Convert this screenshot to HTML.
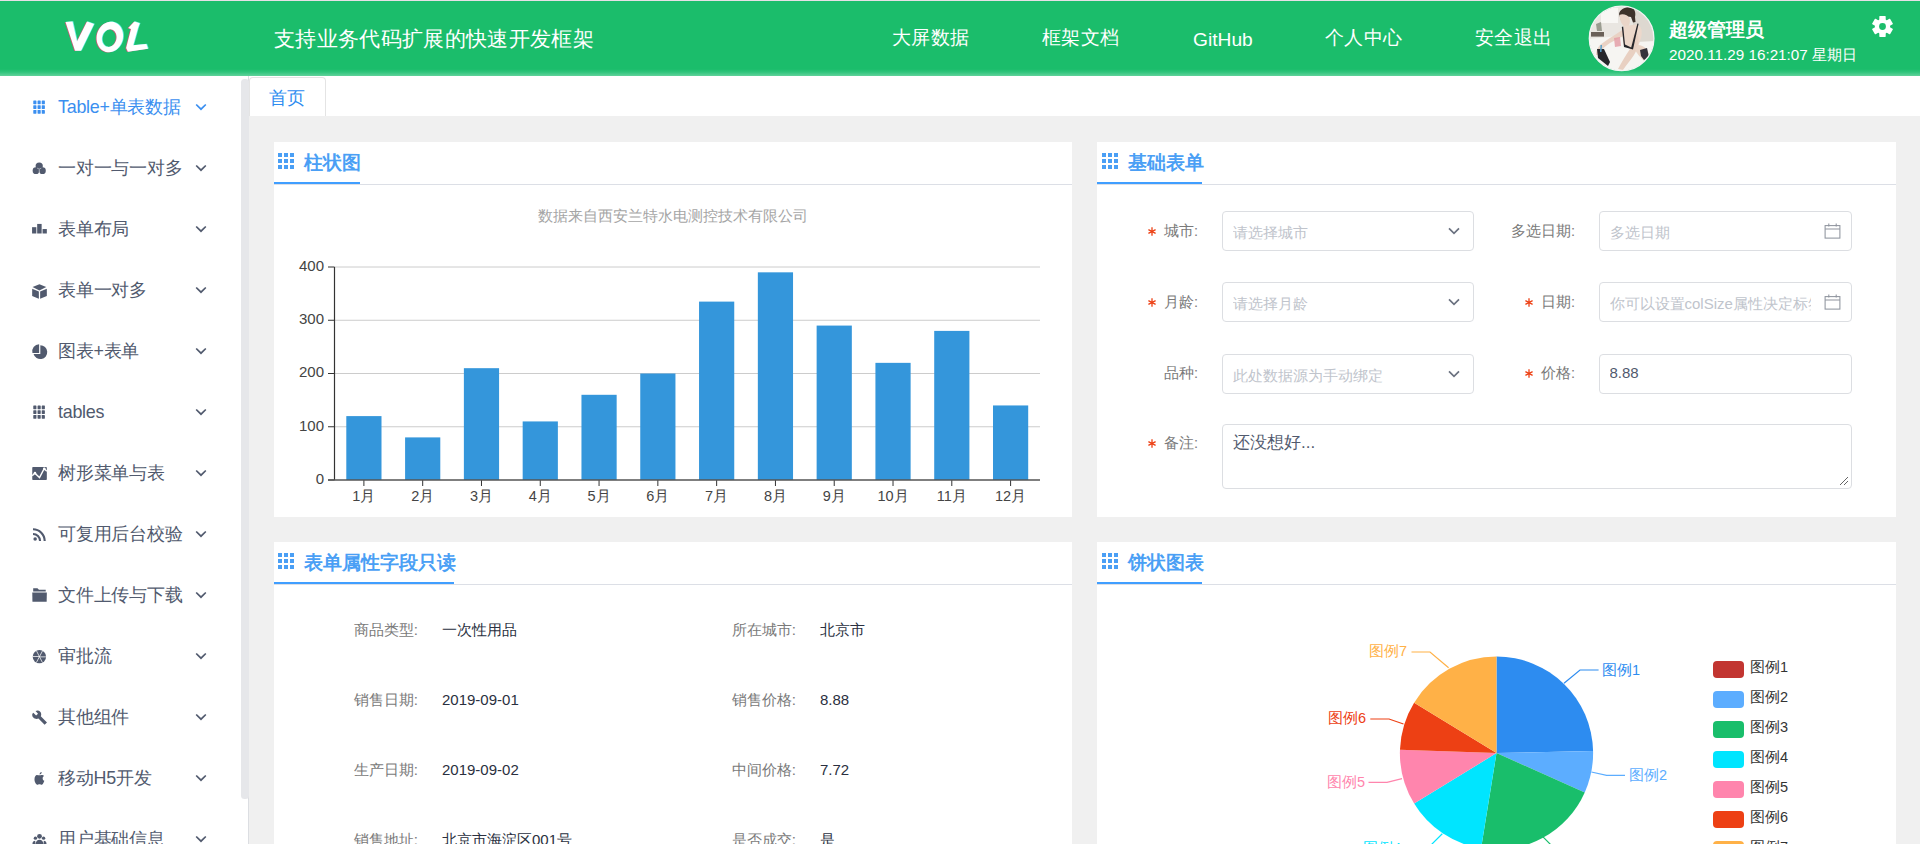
<!DOCTYPE html>
<html><head><meta charset="utf-8">
<style>
*{box-sizing:border-box;margin:0;padding:0}
html,body{width:1920px;height:844px;overflow:hidden;background:#fff;font-family:"Liberation Sans",sans-serif;position:relative}
.abs{position:absolute}
#topline{left:0;top:0;width:1920px;height:1px;background:#e6e0e6}
#header{left:0;top:1px;width:1920px;height:75px;background:linear-gradient(to bottom,#1bbd6b 0,#1bbd6b 68px,#2ec47b 71px,#55cf93 74px,#5fd29a 75px)}
.hd-t{color:#fff;white-space:nowrap;line-height:1}
#sidebar{left:0;top:76px;width:248px;height:768px;background:#fff}
#sbline{left:248px;top:76px;width:1px;height:768px;background:#dcdee2}
#sbthumb{left:241px;top:79px;width:7.5px;height:720px;background:#e6e7ea;border-radius:3.5px}
.mi{position:absolute;left:0;width:240px;height:61px}
.mi .tx{position:absolute;left:58px;top:50%;transform:translateY(-50%);margin-top:0px;font-size:17.9px;letter-spacing:-0.25px;color:#515a6e;white-space:nowrap;line-height:1}
.mi .ic{position:absolute;left:32.5px;top:50%;margin-top:-6.5px;width:13px;height:13px;overflow:visible}
.mi .chev{position:absolute;left:195px;top:50%;margin-top:-5px;width:12px;height:8px}
#main{left:249px;top:76px;width:1671px;height:768px;background:#f0f0f0}
#tabbar{left:249px;top:76px;width:1671px;height:40px;background:#fff}
#tab{left:249px;top:77px;width:77px;height:39px;border:1px solid #e4e4e4;border-bottom:none;border-radius:4px 4px 0 0;background:#fff}
.card{position:absolute;background:#fff}
.ch{position:absolute;left:0;top:0;right:0;height:43px;border-bottom:1px solid #dcdfe6}
.ch .ul{position:absolute;left:0;top:40px;height:2px;background:#409eff}
.ch .ti{position:absolute;top:9.5px;font-size:18.7px;font-weight:bold;color:#4a9ff5;white-space:nowrap;line-height:22px}
.gridic{position:absolute;width:16px;height:16px}
.inp{border:1px solid #dcdee2;border-radius:4px;background:#fff;overflow:hidden}
.inp .it{position:absolute;left:9.5px;top:50%;transform:translateY(-50%);margin-top:1px;font-size:15px;white-space:nowrap;line-height:1;max-width:212px;overflow:hidden}
.inp .it.cut{max-width:201px}
.flab{width:200px;text-align:right;font-size:14.5px;color:#7a7a7a;line-height:20px;white-space:nowrap}
.star{margin-right:8px;vertical-align:0px}
.rl{width:200px;text-align:right;font-size:15.2px;color:#7a7a7a;line-height:20px;white-space:nowrap}
.rv{font-size:15px;color:#2a3040;line-height:20px;white-space:nowrap}
</style></head><body>
<div id="topline" class="abs"></div>
<div id="header" class="abs"></div>
<svg class="abs" style="left:55px;top:12px" width="105" height="50" viewBox="0 0 105 50">
<g transform="translate(-0.8,0.3)" fill="#f0457a" opacity="0.8"><path d="M10.5,10 L17.5,9.5 L22,29.6 L32,9.5 L39,12 L26,38.8 L20,38.8Z"/><path fill-rule="evenodd" d="M67.45,28.39 L66.83,30.30 L65.99,32.12 L64.97,33.82 L63.77,35.37 L62.41,36.75 L60.93,37.92 L59.34,38.87 L57.67,39.58 L55.96,40.04 L54.22,40.25 L52.50,40.19 L50.81,39.88 L49.20,39.31 L47.67,38.49 L46.28,37.45 L45.02,36.19 L43.93,34.74 L43.03,33.12 L42.33,31.37 L41.85,29.50 L41.58,27.56 L41.55,25.58 L41.73,23.58 L42.15,21.61 L42.77,19.70 L43.61,17.88 L44.63,16.18 L45.83,14.63 L47.19,13.25 L48.67,12.08 L50.26,11.13 L51.93,10.42 L53.64,9.96 L55.38,9.75 L57.10,9.81 L58.79,10.12 L60.40,10.69 L61.92,11.51 L63.32,12.55 L64.58,13.81 L65.67,15.26 L66.57,16.88 L67.27,18.63 L67.75,20.50 L68.02,22.44 L68.05,24.42 L67.87,26.42Z M61.40,26.83 L61.51,25.67 L61.51,24.53 L61.37,23.42 L61.12,22.35 L60.75,21.34 L60.26,20.41 L59.67,19.59 L58.99,18.87 L58.23,18.28 L57.39,17.82 L56.50,17.50 L55.58,17.33 L54.63,17.31 L53.67,17.44 L52.72,17.72 L51.79,18.15 L50.91,18.70 L50.08,19.39 L49.33,20.19 L48.66,21.09 L48.08,22.07 L47.61,23.13 L47.25,24.24 L47.00,25.37 L46.89,26.53 L46.89,27.67 L47.03,28.78 L47.28,29.85 L47.65,30.86 L48.14,31.79 L48.73,32.61 L49.41,33.33 L50.18,33.92 L51.01,34.38 L51.90,34.70 L52.82,34.87 L53.77,34.89 L54.73,34.76 L55.68,34.48 L56.61,34.05 L57.49,33.50 L58.32,32.81 L59.07,32.01 L59.74,31.11 L60.32,30.12 L60.79,29.07 L61.15,27.96Z"/><path d="M79.4,9.5 L84.7,11.3 L83,16 L78.2,33.2 L91.3,32 L93,36.7 L72.9,39.7 L71.1,36.1 L76,17 L73.2,16Z"/></g>
<g transform="translate(0.8,-0.2)" fill="#7ff" opacity="0.8"><path d="M10.5,10 L17.5,9.5 L22,29.6 L32,9.5 L39,12 L26,38.8 L20,38.8Z"/><path fill-rule="evenodd" d="M67.45,28.39 L66.83,30.30 L65.99,32.12 L64.97,33.82 L63.77,35.37 L62.41,36.75 L60.93,37.92 L59.34,38.87 L57.67,39.58 L55.96,40.04 L54.22,40.25 L52.50,40.19 L50.81,39.88 L49.20,39.31 L47.67,38.49 L46.28,37.45 L45.02,36.19 L43.93,34.74 L43.03,33.12 L42.33,31.37 L41.85,29.50 L41.58,27.56 L41.55,25.58 L41.73,23.58 L42.15,21.61 L42.77,19.70 L43.61,17.88 L44.63,16.18 L45.83,14.63 L47.19,13.25 L48.67,12.08 L50.26,11.13 L51.93,10.42 L53.64,9.96 L55.38,9.75 L57.10,9.81 L58.79,10.12 L60.40,10.69 L61.92,11.51 L63.32,12.55 L64.58,13.81 L65.67,15.26 L66.57,16.88 L67.27,18.63 L67.75,20.50 L68.02,22.44 L68.05,24.42 L67.87,26.42Z M61.40,26.83 L61.51,25.67 L61.51,24.53 L61.37,23.42 L61.12,22.35 L60.75,21.34 L60.26,20.41 L59.67,19.59 L58.99,18.87 L58.23,18.28 L57.39,17.82 L56.50,17.50 L55.58,17.33 L54.63,17.31 L53.67,17.44 L52.72,17.72 L51.79,18.15 L50.91,18.70 L50.08,19.39 L49.33,20.19 L48.66,21.09 L48.08,22.07 L47.61,23.13 L47.25,24.24 L47.00,25.37 L46.89,26.53 L46.89,27.67 L47.03,28.78 L47.28,29.85 L47.65,30.86 L48.14,31.79 L48.73,32.61 L49.41,33.33 L50.18,33.92 L51.01,34.38 L51.90,34.70 L52.82,34.87 L53.77,34.89 L54.73,34.76 L55.68,34.48 L56.61,34.05 L57.49,33.50 L58.32,32.81 L59.07,32.01 L59.74,31.11 L60.32,30.12 L60.79,29.07 L61.15,27.96Z"/><path d="M79.4,9.5 L84.7,11.3 L83,16 L78.2,33.2 L91.3,32 L93,36.7 L72.9,39.7 L71.1,36.1 L76,17 L73.2,16Z"/></g>
<g fill="#fff"><path d="M10.5,10 L17.5,9.5 L22,29.6 L32,9.5 L39,12 L26,38.8 L20,38.8Z"/><path fill-rule="evenodd" d="M67.45,28.39 L66.83,30.30 L65.99,32.12 L64.97,33.82 L63.77,35.37 L62.41,36.75 L60.93,37.92 L59.34,38.87 L57.67,39.58 L55.96,40.04 L54.22,40.25 L52.50,40.19 L50.81,39.88 L49.20,39.31 L47.67,38.49 L46.28,37.45 L45.02,36.19 L43.93,34.74 L43.03,33.12 L42.33,31.37 L41.85,29.50 L41.58,27.56 L41.55,25.58 L41.73,23.58 L42.15,21.61 L42.77,19.70 L43.61,17.88 L44.63,16.18 L45.83,14.63 L47.19,13.25 L48.67,12.08 L50.26,11.13 L51.93,10.42 L53.64,9.96 L55.38,9.75 L57.10,9.81 L58.79,10.12 L60.40,10.69 L61.92,11.51 L63.32,12.55 L64.58,13.81 L65.67,15.26 L66.57,16.88 L67.27,18.63 L67.75,20.50 L68.02,22.44 L68.05,24.42 L67.87,26.42Z M61.40,26.83 L61.51,25.67 L61.51,24.53 L61.37,23.42 L61.12,22.35 L60.75,21.34 L60.26,20.41 L59.67,19.59 L58.99,18.87 L58.23,18.28 L57.39,17.82 L56.50,17.50 L55.58,17.33 L54.63,17.31 L53.67,17.44 L52.72,17.72 L51.79,18.15 L50.91,18.70 L50.08,19.39 L49.33,20.19 L48.66,21.09 L48.08,22.07 L47.61,23.13 L47.25,24.24 L47.00,25.37 L46.89,26.53 L46.89,27.67 L47.03,28.78 L47.28,29.85 L47.65,30.86 L48.14,31.79 L48.73,32.61 L49.41,33.33 L50.18,33.92 L51.01,34.38 L51.90,34.70 L52.82,34.87 L53.77,34.89 L54.73,34.76 L55.68,34.48 L56.61,34.05 L57.49,33.50 L58.32,32.81 L59.07,32.01 L59.74,31.11 L60.32,30.12 L60.79,29.07 L61.15,27.96Z"/><path d="M79.4,9.5 L84.7,11.3 L83,16 L78.2,33.2 L91.3,32 L93,36.7 L72.9,39.7 L71.1,36.1 L76,17 L73.2,16Z"/></g>
</svg>
<div class="abs hd-t" style="left:274px;top:28px;font-size:21px;letter-spacing:0.33px">支持业务代码扩展的快速开发框架</div>
<div class="abs hd-t" style="left:892px;top:28px;font-size:19px;letter-spacing:0.45px">大屏数据</div>
<div class="abs hd-t" style="left:1042px;top:28px;font-size:19px;letter-spacing:0.45px">框架文档</div>
<div class="abs hd-t" style="left:1193px;top:30px;font-size:19.2px">GitHub</div>
<div class="abs hd-t" style="left:1325px;top:28px;font-size:19px;letter-spacing:0.45px">个人中心</div>
<div class="abs hd-t" style="left:1475px;top:28px;font-size:19px;letter-spacing:0.45px">安全退出</div>
<div class="abs hd-t" style="left:1669px;top:20px;font-size:19px;font-weight:bold">超级管理员</div>
<div class="abs hd-t" style="left:1669px;top:47px;font-size:15.25px">2020.11.29 16:21:07 星期日</div>
<svg class="abs" style="left:1588px;top:5px" width="67" height="67" viewBox="0 0 67 67">
<defs><clipPath id="avc"><circle cx="33.6" cy="33.4" r="32.2"/></clipPath><filter id="avb" x="-5%" y="-5%" width="110%" height="110%"><feGaussianBlur stdDeviation="0.6"/></filter></defs>
<g clip-path="url(#avc)"><g filter="url(#avb)">
<rect x="0" y="0" width="67" height="67" fill="#e9e6e1"/>
<rect x="13" y="3" width="17" height="15" fill="#f8f7f4"/>
<rect x="45" y="0" width="22" height="38" fill="#ddd8d0"/>
<rect x="3" y="27" width="13" height="4.6" fill="#6a6058"/>
<path d="M8,19 L13,17 L14,26 L9,26Z" fill="#9a9c90"/>
<path d="M0,34 L30,31 L48,37 L67,36 L67,67 L0,67Z" fill="#f6f5f2"/>
<path d="M31,9 C32,4 38,1.5 43,2.5 C47,4 48,8 47,12 L47.5,17 L45,17.5 L43,12 C39,11 35,12 33,15Z" fill="#3e302b"/>
<path d="M31.5,10 C34,8.5 40,9.5 41.5,13.5 C42.5,17 41.5,20.5 39.5,22.5 C35,22 32,18 31.5,10Z" fill="#ead5c8"/>
<path d="M36,21 L48,19.5 C53,20.5 55,25 53,33 L50,42 C46,44 40,44 36,41 C34,35 34,27 36,21Z" fill="#ecd8cb"/>
<path d="M36,24 C30,28 20,34 12,40 C9,43 8,47 8,50 L11,50 C12,46 16,42 22,38 L37,30Z" fill="#e9d2c4"/>
<path d="M49,28 C52,34 50,44 46,50 C42,56 38,60 35,65 L30,64 C33,58 38,50 42,44 L45,30Z" fill="#e8d0c2"/>
<path d="M50,40 C56,40 61,45 61,52 L56,56 C52,52 48,48 47,44Z" fill="#ead4c6"/>
<path d="M35.2,21.5 L37,39.5 L43.2,42.5 L49.4,18.4 L50.6,18.8 L45,44.5 L36,42 L33.8,22Z" fill="#26252a"/>
<path d="M52,45 L59,43 L61,52 L56,55 L53,51Z" fill="#36313a"/>
<path d="M9,44 L16,44 L22,57 L20,61 L10,53Z" fill="#26262b"/>
<path d="M12.5,40 L14,40 L13.5,47 L12,47Z" fill="#5aa0c8"/>
<path d="M26,33 L32,32 L33,41 L27,42Z" fill="#e39aa3" opacity="0.8"/>
</g></g>
<circle cx="33.6" cy="33.4" r="32.3" fill="none" stroke="#f4f4f4" stroke-width="1.3"/>
</svg>
<svg class="abs" style="left:1871px;top:15px" width="23" height="23" viewBox="-11.5 -11.5 23 23">
<g fill="#fff"><circle r="7.6"/>
<rect x="-3.2" y="-10.4" width="6.4" height="20.8" rx="0.6"/>
<rect x="-3.2" y="-10.4" width="6.4" height="20.8" rx="0.6" transform="rotate(60)"/>
<rect x="-3.2" y="-10.4" width="6.4" height="20.8" rx="0.6" transform="rotate(-60)"/></g>
<circle r="3.4" fill="#1bbd6b"/>
</svg>
<div id="sidebar" class="abs"></div>
<div class="mi" style="top:77px"><svg class="ic" viewBox="0 0 14 14"><g fill="#3b8ff0"><rect x="0.3" y="-0.5" width="3.4" height="3.9" rx="0.5"/><rect x="0.3" y="4.6" width="3.4" height="3.9" rx="0.5"/><rect x="0.3" y="9.7" width="3.4" height="3.9" rx="0.5"/><rect x="4.9" y="-0.5" width="3.4" height="3.9" rx="0.5"/><rect x="4.9" y="4.6" width="3.4" height="3.9" rx="0.5"/><rect x="4.9" y="9.7" width="3.4" height="3.9" rx="0.5"/><rect x="9.4" y="-0.5" width="3.4" height="3.9" rx="0.5"/><rect x="9.4" y="4.6" width="3.4" height="3.9" rx="0.5"/><rect x="9.4" y="9.7" width="3.4" height="3.9" rx="0.5"/></g></svg><span class="tx" style="color:#3b8ff0">Table+单表数据</span><svg class="chev" viewBox="0 0 12 8"><path d="M1.2,1.5 L6,6.2 L10.8,1.5" fill="none" stroke="#3b8ff0" stroke-width="1.7"/></svg></div>
<div class="mi" style="top:138px"><svg class="ic" viewBox="0 0 14 14"><g fill="#515a6e"><circle cx="3.2" cy="9.3" r="3.6"/><circle cx="10.2" cy="9.3" r="3.6"/><circle cx="6.7" cy="4.4" r="3.9"/></g><path d="M4.4,6.6 Q6.7,8.6 9,6.6 M6.7,8.1 V13.2" stroke="#fff" stroke-width="0.5" fill="none"/></svg><span class="tx" style="color:#515a6e">一对一与一对多</span><svg class="chev" viewBox="0 0 12 8"><path d="M1.2,1.5 L6,6.2 L10.8,1.5" fill="none" stroke="#515a6e" stroke-width="1.7"/></svg></div>
<div class="mi" style="top:199px"><svg class="ic" viewBox="0 0 14 14"><g fill="#515a6e"><rect x="-1" y="4.5" width="4.6" height="6.8"/><rect x="4.5" y="1" width="4.8" height="10.3"/><rect x="10.3" y="6.5" width="4.6" height="4.8"/></g></svg><span class="tx" style="color:#515a6e">表单布局</span><svg class="chev" viewBox="0 0 12 8"><path d="M1.2,1.5 L6,6.2 L10.8,1.5" fill="none" stroke="#515a6e" stroke-width="1.7"/></svg></div>
<div class="mi" style="top:260px"><svg class="ic" viewBox="0 0 14 14"><g fill="#515a6e"><path d="M-0.5,3.3 L6.9,0.2 L14.3,3.3 L6.9,7Z"/><path d="M-0.9,5.2 L6.3,8.2 L6.3,16 L-0.9,12.9Z"/><path d="M14.9,5.2 L7.7,8.2 L7.7,16 L14.9,12.9Z"/></g></svg><span class="tx" style="color:#515a6e">表单一对多</span><svg class="chev" viewBox="0 0 12 8"><path d="M1.2,1.5 L6,6.2 L10.8,1.5" fill="none" stroke="#515a6e" stroke-width="1.7"/></svg></div>
<div class="mi" style="top:321px"><svg class="ic" viewBox="0 0 14 14"><g fill="#515a6e"><path d="M6.6,-0.8 V8.5 H-0.6 A7.4,7.4 0 0 1 6.6,-0.8Z"/><path d="M7.9,0.2 A7.5,7.5 0 1 1 0.6,9.7 H7.9Z"/></g></svg><span class="tx" style="color:#515a6e">图表+表单</span><svg class="chev" viewBox="0 0 12 8"><path d="M1.2,1.5 L6,6.2 L10.8,1.5" fill="none" stroke="#515a6e" stroke-width="1.7"/></svg></div>
<div class="mi" style="top:382px"><svg class="ic" viewBox="0 0 14 14"><g fill="#515a6e"><rect x="0.3" y="-0.5" width="3.4" height="3.9" rx="0.5"/><rect x="0.3" y="4.6" width="3.4" height="3.9" rx="0.5"/><rect x="0.3" y="9.7" width="3.4" height="3.9" rx="0.5"/><rect x="4.9" y="-0.5" width="3.4" height="3.9" rx="0.5"/><rect x="4.9" y="4.6" width="3.4" height="3.9" rx="0.5"/><rect x="4.9" y="9.7" width="3.4" height="3.9" rx="0.5"/><rect x="9.4" y="-0.5" width="3.4" height="3.9" rx="0.5"/><rect x="9.4" y="4.6" width="3.4" height="3.9" rx="0.5"/><rect x="9.4" y="9.7" width="3.4" height="3.9" rx="0.5"/></g></svg><span class="tx" style="color:#515a6e">tables</span><svg class="chev" viewBox="0 0 12 8"><path d="M1.2,1.5 L6,6.2 L10.8,1.5" fill="none" stroke="#515a6e" stroke-width="1.7"/></svg></div>
<div class="mi" style="top:443px"><svg class="ic" viewBox="0 0 14 14"><rect x="-0.8" y="-0.1" width="15.7" height="14.1" rx="0.8" fill="#515a6e"/><path d="M-0.8,9.5 L2,6.6 L7,11.4 L12,1.8 L14.9,4.6" fill="none" stroke="#fff" stroke-width="1.5"/><circle cx="2.1" cy="6.6" r="1.4" fill="#fff"/><circle cx="12.2" cy="2" r="1.4" fill="#fff"/></svg><span class="tx" style="color:#515a6e">树形菜单与表</span><svg class="chev" viewBox="0 0 12 8"><path d="M1.2,1.5 L6,6.2 L10.8,1.5" fill="none" stroke="#515a6e" stroke-width="1.7"/></svg></div>
<div class="mi" style="top:504px"><svg class="ic" viewBox="0 0 14 14"><g fill="none" stroke="#515a6e" stroke-width="2.3"><path d="M0,6.4 A7.6,7.6 0 0 1 7.6,14"/><path d="M0,1.4 A12.6,12.6 0 0 1 12.6,14"/></g><circle cx="2.3" cy="11.9" r="1.9" fill="#515a6e"/></svg><span class="tx" style="color:#515a6e">可复用后台校验</span><svg class="chev" viewBox="0 0 12 8"><path d="M1.2,1.5 L6,6.2 L10.8,1.5" fill="none" stroke="#515a6e" stroke-width="1.7"/></svg></div>
<div class="mi" style="top:565px"><svg class="ic" viewBox="0 0 14 14"><g fill="#515a6e"><path d="M0.2,-0.8 H4.8 L6.4,0.8 H13.7 V2.6 H0.2Z"/><path d="M-0.8,3.9 H14.9 L14.7,13.7 H-0.6Z"/></g></svg><span class="tx" style="color:#515a6e">文件上传与下载</span><svg class="chev" viewBox="0 0 12 8"><path d="M1.2,1.5 L6,6.2 L10.8,1.5" fill="none" stroke="#515a6e" stroke-width="1.7"/></svg></div>
<div class="mi" style="top:626px"><svg class="ic" viewBox="0 0 14 14"><circle cx="6.9" cy="7.2" r="7.2" fill="#515a6e"/><g stroke="#fff" stroke-width="0.8" fill="none"><path d="M-0.5,7 H6.9 M7.2,7.4 H14.5 M3.6,0.6 L10.2,13.6 M10.4,0.6 L3.6,13.6"/></g></svg><span class="tx" style="color:#515a6e">审批流</span><svg class="chev" viewBox="0 0 12 8"><path d="M1.2,1.5 L6,6.2 L10.8,1.5" fill="none" stroke="#515a6e" stroke-width="1.7"/></svg></div>
<div class="mi" style="top:687px"><svg class="ic" viewBox="0 0 14 14"><path transform="translate(7,7) scale(1.15) translate(-7,-6.8)" fill="#515a6e" d="M1.2,2.3 L3.8,4.9 L5.6,3.4 L3.3,0.8 C5.5,-0.6 8.4,0.7 8.6,3.5 C8.7,4.3 8.5,5 8.2,5.6 L14,11.4 L11.8,13.6 L6,7.8 C3.2,9 -0.2,7 0.2,3.8 C0.3,3.2 0.6,2.7 1.2,2.3Z"/></svg><span class="tx" style="color:#515a6e">其他组件</span><svg class="chev" viewBox="0 0 12 8"><path d="M1.2,1.5 L6,6.2 L10.8,1.5" fill="none" stroke="#515a6e" stroke-width="1.7"/></svg></div>
<div class="mi" style="top:748px"><svg class="ic" viewBox="0 0 14 14"><g fill="#515a6e"><path d="M4.2,3.1 C5.2,3.1 6,3.6 7,3.6 C8,3.6 8.6,3.1 9.8,3.1 C10.7,3.1 11.4,3.6 11.9,4.2 C10.8,4.9 10.4,5.8 10.4,6.9 C10.4,8.2 11.1,9.1 12.2,9.5 C11.8,10.8 10.9,13.6 9.4,13.6 C8.4,13.6 8.1,13.1 7,13.1 C5.9,13.1 5.5,13.6 4.6,13.6 C3.1,13.6 1.6,10.6 1.6,7.9 C1.6,4.8 3,3.1 4.2,3.1Z"/><path d="M7.1,2.6 C7,1.2 8.1,0.2 9.3,0 C9.5,1.4 8.3,2.6 7.1,2.6Z"/></g></svg><span class="tx" style="color:#515a6e">移动H5开发</span><svg class="chev" viewBox="0 0 12 8"><path d="M1.2,1.5 L6,6.2 L10.8,1.5" fill="none" stroke="#515a6e" stroke-width="1.7"/></svg></div>
<div class="mi" style="top:809px"><svg class="ic" viewBox="0 0 14 14"><g fill="#515a6e"><circle cx="7" cy="3.6" r="2.6"/><path d="M2.6,13 C2.6,9 4.6,7.2 7,7.2 C9.4,7.2 11.4,9 11.4,13Z"/><circle cx="2.6" cy="5.6" r="1.8"/><circle cx="11.4" cy="5.6" r="1.8"/><path d="M-0.6,12 C-0.6,9.4 0.6,8.4 2.4,8.4 L2.6,12Z M14.6,12 C14.6,9.4 13.4,8.4 11.6,8.4 L11.4,12Z"/></g></svg><span class="tx" style="color:#515a6e">用户基础信息</span><svg class="chev" viewBox="0 0 12 8"><path d="M1.2,1.5 L6,6.2 L10.8,1.5" fill="none" stroke="#515a6e" stroke-width="1.7"/></svg></div>
<div id="sbline" class="abs"></div>
<div id="sbthumb" class="abs"></div>
<div id="main" class="abs"></div>
<div id="tabbar" class="abs"></div>
<div id="tab" class="abs"></div><div class="abs" style="left:269px;top:87px;font-size:18px;color:#2d8cf0;line-height:22px;white-space:nowrap">首页</div>

<div class="card" style="left:274px;top:142px;width:798px;height:375px"><div class="ch"><svg class="gridic" style="left:4px;top:11px" viewBox="0 0 16 16"><g fill="#4a9ff5"><rect x="0" y="0" width="4" height="4"/><rect x="0" y="6" width="4" height="4"/><rect x="0" y="12" width="4" height="4"/><rect x="6" y="0" width="4" height="4"/><rect x="6" y="6" width="4" height="4"/><rect x="6" y="12" width="4" height="4"/><rect x="12" y="0" width="4" height="4"/><rect x="12" y="6" width="4" height="4"/><rect x="12" y="12" width="4" height="4"/></g></svg><div class="ti" style="left:30px">柱状图</div><div class="ul" style="width:86px"></div></div></div>
<svg class="abs" style="left:274px;top:142px" width="798" height="375" viewBox="274 142 798 375"><text x="673" y="221" text-anchor="middle" font-size="14.5" fill="#a5a5a5">数据来自西安兰特水电测控技术有限公司</text><line x1="328" x2="334.5" y1="480.00" y2="480.00" stroke="#333" stroke-width="1"/><text x="324" y="483.80" text-anchor="end" font-size="15" fill="#444">0</text><line x1="334.5" x2="1040" y1="426.75" y2="426.75" stroke="#ccc" stroke-width="1"/><line x1="328" x2="334.5" y1="426.75" y2="426.75" stroke="#333" stroke-width="1"/><text x="324" y="430.55" text-anchor="end" font-size="15" fill="#444">100</text><line x1="334.5" x2="1040" y1="373.50" y2="373.50" stroke="#ccc" stroke-width="1"/><line x1="328" x2="334.5" y1="373.50" y2="373.50" stroke="#333" stroke-width="1"/><text x="324" y="377.30" text-anchor="end" font-size="15" fill="#444">200</text><line x1="334.5" x2="1040" y1="320.25" y2="320.25" stroke="#ccc" stroke-width="1"/><line x1="328" x2="334.5" y1="320.25" y2="320.25" stroke="#333" stroke-width="1"/><text x="324" y="324.05" text-anchor="end" font-size="15" fill="#444">300</text><line x1="334.5" x2="1040" y1="267.00" y2="267.00" stroke="#ccc" stroke-width="1"/><line x1="328" x2="334.5" y1="267.00" y2="267.00" stroke="#333" stroke-width="1"/><text x="324" y="270.80" text-anchor="end" font-size="15" fill="#444">400</text><rect x="346.30" y="416.10" width="35.2" height="63.90" fill="#3496db"/><line x1="363.90" x2="363.90" y1="480" y2="486" stroke="#333" stroke-width="1"/><text x="363.90" y="501" text-anchor="middle" font-size="14.5" fill="#444">1月</text><rect x="405.09" y="437.40" width="35.2" height="42.60" fill="#3496db"/><line x1="422.69" x2="422.69" y1="480" y2="486" stroke="#333" stroke-width="1"/><text x="422.69" y="501" text-anchor="middle" font-size="14.5" fill="#444">2月</text><rect x="463.88" y="368.18" width="35.2" height="111.82" fill="#3496db"/><line x1="481.48" x2="481.48" y1="480" y2="486" stroke="#333" stroke-width="1"/><text x="481.48" y="501" text-anchor="middle" font-size="14.5" fill="#444">3月</text><rect x="522.67" y="421.43" width="35.2" height="58.57" fill="#3496db"/><line x1="540.27" x2="540.27" y1="480" y2="486" stroke="#333" stroke-width="1"/><text x="540.27" y="501" text-anchor="middle" font-size="14.5" fill="#444">4月</text><rect x="581.46" y="394.80" width="35.2" height="85.20" fill="#3496db"/><line x1="599.06" x2="599.06" y1="480" y2="486" stroke="#333" stroke-width="1"/><text x="599.06" y="501" text-anchor="middle" font-size="14.5" fill="#444">5月</text><rect x="640.25" y="373.50" width="35.2" height="106.50" fill="#3496db"/><line x1="657.85" x2="657.85" y1="480" y2="486" stroke="#333" stroke-width="1"/><text x="657.85" y="501" text-anchor="middle" font-size="14.5" fill="#444">6月</text><rect x="699.05" y="301.61" width="35.2" height="178.39" fill="#3496db"/><line x1="716.65" x2="716.65" y1="480" y2="486" stroke="#333" stroke-width="1"/><text x="716.65" y="501" text-anchor="middle" font-size="14.5" fill="#444">7月</text><rect x="757.84" y="272.33" width="35.2" height="207.67" fill="#3496db"/><line x1="775.44" x2="775.44" y1="480" y2="486" stroke="#333" stroke-width="1"/><text x="775.44" y="501" text-anchor="middle" font-size="14.5" fill="#444">8月</text><rect x="816.63" y="325.58" width="35.2" height="154.42" fill="#3496db"/><line x1="834.23" x2="834.23" y1="480" y2="486" stroke="#333" stroke-width="1"/><text x="834.23" y="501" text-anchor="middle" font-size="14.5" fill="#444">9月</text><rect x="875.42" y="362.85" width="35.2" height="117.15" fill="#3496db"/><line x1="893.02" x2="893.02" y1="480" y2="486" stroke="#333" stroke-width="1"/><text x="893.02" y="501" text-anchor="middle" font-size="14.5" fill="#444">10月</text><rect x="934.21" y="330.90" width="35.2" height="149.10" fill="#3496db"/><line x1="951.81" x2="951.81" y1="480" y2="486" stroke="#333" stroke-width="1"/><text x="951.81" y="501" text-anchor="middle" font-size="14.5" fill="#444">11月</text><rect x="993.00" y="405.45" width="35.2" height="74.55" fill="#3496db"/><line x1="1010.60" x2="1010.60" y1="480" y2="486" stroke="#333" stroke-width="1"/><text x="1010.60" y="501" text-anchor="middle" font-size="14.5" fill="#444">12月</text><line x1="334.5" x2="334.5" y1="267" y2="480" stroke="#333" stroke-width="1.2"/><line x1="328" x2="1040" y1="480" y2="480" stroke="#555" stroke-width="1.6"/></svg>
<div class="card" style="left:1097px;top:142px;width:799px;height:375px"><div class="ch"><svg class="gridic" style="left:5px;top:11px" viewBox="0 0 16 16"><g fill="#4a9ff5"><rect x="0" y="0" width="4" height="4"/><rect x="0" y="6" width="4" height="4"/><rect x="0" y="12" width="4" height="4"/><rect x="6" y="0" width="4" height="4"/><rect x="6" y="6" width="4" height="4"/><rect x="6" y="12" width="4" height="4"/><rect x="12" y="0" width="4" height="4"/><rect x="12" y="6" width="4" height="4"/><rect x="12" y="12" width="4" height="4"/></g></svg><div class="ti" style="left:31px">基础表单</div><div class="ul" style="width:105px"></div></div></div>
<div class="abs flab" style="left:998px;top:221px"><svg class="star" width="8" height="9" viewBox="0 0 8 9"><path d="M4,0.3 V8.7 M0.4,2.6 L7.6,6.4 M0.4,6.4 L7.6,2.6" stroke="#ed4014" stroke-width="1.3" fill="none"/></svg>城市:</div><div class="abs inp" style="left:1222px;top:211px;width:252px;height:40px"><span class="it" style="color:#c0c4cc">请选择城市</span><svg class="abs" style="right:13px;top:50%;margin-top:-4px" width="12" height="8" viewBox="0 0 12 8"><path d="M1,1.3 L6,6.3 L11,1.3" fill="none" stroke="#6b7280" stroke-width="1.7"/></svg></div><div class="abs flab" style="left:1375px;top:221px">多选日期:</div><div class="abs inp" style="left:1599px;top:211px;width:253px;height:40px"><span class="it" style="color:#c0c4cc">多选日期</span><svg class="abs" style="right:10px;top:50%;margin-top:-8px" width="17" height="16" viewBox="0 0 17 16"><g fill="none" stroke="#8f949e" stroke-width="1.05"><rect x="1.1" y="2.6" width="14.8" height="12.5"/><path d="M1.1,6 H15.9 M4.8,0.6 V3.6 M12.2,0.6 V3.6"/></g></svg></div><div class="abs flab" style="left:998px;top:292px"><svg class="star" width="8" height="9" viewBox="0 0 8 9"><path d="M4,0.3 V8.7 M0.4,2.6 L7.6,6.4 M0.4,6.4 L7.6,2.6" stroke="#ed4014" stroke-width="1.3" fill="none"/></svg>月龄:</div><div class="abs inp" style="left:1222px;top:282px;width:252px;height:40px"><span class="it" style="color:#c0c4cc">请选择月龄</span><svg class="abs" style="right:13px;top:50%;margin-top:-4px" width="12" height="8" viewBox="0 0 12 8"><path d="M1,1.3 L6,6.3 L11,1.3" fill="none" stroke="#6b7280" stroke-width="1.7"/></svg></div><div class="abs flab" style="left:1375px;top:292px"><svg class="star" width="8" height="9" viewBox="0 0 8 9"><path d="M4,0.3 V8.7 M0.4,2.6 L7.6,6.4 M0.4,6.4 L7.6,2.6" stroke="#ed4014" stroke-width="1.3" fill="none"/></svg>日期:</div><div class="abs inp" style="left:1599px;top:282px;width:253px;height:40px"><span class="it cut" style="color:#c0c4cc">你可以设置colSize属性决定标签</span><svg class="abs" style="right:10px;top:50%;margin-top:-8px" width="17" height="16" viewBox="0 0 17 16"><g fill="none" stroke="#8f949e" stroke-width="1.05"><rect x="1.1" y="2.6" width="14.8" height="12.5"/><path d="M1.1,6 H15.9 M4.8,0.6 V3.6 M12.2,0.6 V3.6"/></g></svg></div><div class="abs flab" style="left:998px;top:363px">品种:</div><div class="abs inp" style="left:1222px;top:354px;width:252px;height:40px"><span class="it" style="color:#c0c4cc">此处数据源为手动绑定</span><svg class="abs" style="right:13px;top:50%;margin-top:-4px" width="12" height="8" viewBox="0 0 12 8"><path d="M1,1.3 L6,6.3 L11,1.3" fill="none" stroke="#6b7280" stroke-width="1.7"/></svg></div><div class="abs flab" style="left:1375px;top:363px"><svg class="star" width="8" height="9" viewBox="0 0 8 9"><path d="M4,0.3 V8.7 M0.4,2.6 L7.6,6.4 M0.4,6.4 L7.6,2.6" stroke="#ed4014" stroke-width="1.3" fill="none"/></svg>价格:</div><div class="abs inp" style="left:1599px;top:354px;width:253px;height:40px"><span class="it" style="color:#515a6e;margin-top:-2px">8.88</span></div><div class="abs flab" style="left:998px;top:433px"><svg class="star" width="8" height="9" viewBox="0 0 8 9"><path d="M4,0.3 V8.7 M0.4,2.6 L7.6,6.4 M0.4,6.4 L7.6,2.6" stroke="#ed4014" stroke-width="1.3" fill="none"/></svg>备注:</div><div class="abs inp" style="left:1222px;top:424px;width:630px;height:65px"><span class="abs" style="left:10px;top:8px;font-size:17px;color:#515a6e;line-height:20px">还没想好...</span><svg class="abs" style="right:2px;bottom:2px" width="10" height="10" viewBox="0 0 10 10"><path d="M1,9 L9,1 M5,9 L9,5" stroke="#666" stroke-width="1"/></svg></div>
<div class="card" style="left:274px;top:542px;width:798px;height:302px"><div class="ch"><svg class="gridic" style="left:4px;top:11px" viewBox="0 0 16 16"><g fill="#4a9ff5"><rect x="0" y="0" width="4" height="4"/><rect x="0" y="6" width="4" height="4"/><rect x="0" y="12" width="4" height="4"/><rect x="6" y="0" width="4" height="4"/><rect x="6" y="6" width="4" height="4"/><rect x="6" y="12" width="4" height="4"/><rect x="12" y="0" width="4" height="4"/><rect x="12" y="6" width="4" height="4"/><rect x="12" y="12" width="4" height="4"/></g></svg><div class="ti" style="left:30px">表单属性字段只读</div><div class="ul" style="width:180px"></div></div></div>
<div class="abs rl" style="left:218px;top:620px">商品类型:</div><div class="abs rv" style="left:442px;top:620px">一次性用品</div><div class="abs rl" style="left:596px;top:620px">所在城市:</div><div class="abs rv" style="left:820px;top:620px">北京市</div>
<div class="abs rl" style="left:218px;top:690px">销售日期:</div><div class="abs rv" style="left:442px;top:690px">2019-09-01</div><div class="abs rl" style="left:596px;top:690px">销售价格:</div><div class="abs rv" style="left:820px;top:690px">8.88</div>
<div class="abs rl" style="left:218px;top:760px">生产日期:</div><div class="abs rv" style="left:442px;top:760px">2019-09-02</div><div class="abs rl" style="left:596px;top:760px">中间价格:</div><div class="abs rv" style="left:820px;top:760px">7.72</div>
<div class="abs rl" style="left:218px;top:830px">销售地址:</div><div class="abs rv" style="left:442px;top:830px">北京市海淀区001号</div><div class="abs rl" style="left:596px;top:830px">是否成交:</div><div class="abs rv" style="left:820px;top:830px">是</div>

<div class="card" style="left:1097px;top:542px;width:799px;height:302px"><div class="ch"><svg class="gridic" style="left:5px;top:11px" viewBox="0 0 16 16"><g fill="#4a9ff5"><rect x="0" y="0" width="4" height="4"/><rect x="0" y="6" width="4" height="4"/><rect x="0" y="12" width="4" height="4"/><rect x="6" y="0" width="4" height="4"/><rect x="6" y="6" width="4" height="4"/><rect x="6" y="12" width="4" height="4"/><rect x="12" y="0" width="4" height="4"/><rect x="12" y="6" width="4" height="4"/><rect x="12" y="12" width="4" height="4"/></g></svg><div class="ti" style="left:31px">饼状图表</div><div class="ul" style="width:105px"></div></div></div>
<svg class="abs" style="left:1097px;top:542px" width="799" height="302" viewBox="1097 542 799 302"><path d="M1496.5,753.1 L1496.50,656.50 A96.6,96.6 0 0 1 1593.08,750.91Z" fill="#2d8cf0"/><path d="M1496.5,753.1 L1593.08,750.91 A96.6,96.6 0 0 1 1584.75,792.39Z" fill="#5cadff"/><path d="M1496.5,753.1 L1584.75,792.39 A96.6,96.6 0 0 1 1481.06,848.46Z" fill="#19be6b"/><path d="M1496.5,753.1 L1481.06,848.46 A96.6,96.6 0 0 1 1414.13,803.57Z" fill="#00e5ff"/><path d="M1496.5,753.1 L1414.13,803.57 A96.6,96.6 0 0 1 1399.96,749.73Z" fill="#ff85ad"/><path d="M1496.5,753.1 L1399.96,749.73 A96.6,96.6 0 0 1 1414.13,702.63Z" fill="#ed4014"/><path d="M1496.5,753.1 L1414.13,702.63 A96.6,96.6 0 0 1 1496.50,656.50Z" fill="#ffb147"/><polyline points="1564,683.2 1580,670 1598.6,670" fill="none" stroke="#2d8cf0" stroke-width="1.2"/><polyline points="1591.4,772 1606.6,775.3 1625,775.3" fill="none" stroke="#5cadff" stroke-width="1.2"/><polyline points="1448.6,667.8 1430,652 1411.5,652" fill="none" stroke="#ffb147" stroke-width="1.2"/><polyline points="1403.5,724 1389,719 1370.3,719" fill="none" stroke="#ed4014" stroke-width="1.2"/><polyline points="1402,778.7 1387,782.4 1368.5,782.4" fill="none" stroke="#ff85ad" stroke-width="1.2"/><polyline points="1442.3,833.75 1428,848 1410,848" fill="none" stroke="#00e5ff" stroke-width="1.2"/><polyline points="1543,836.9 1556,850 1575,850" fill="none" stroke="#19be6b" stroke-width="1.2"/><text x="1602" y="675" text-anchor="start" font-size="14.5" fill="#2d8cf0">图例1</text><text x="1629" y="780" text-anchor="start" font-size="14.5" fill="#5cadff">图例2</text><text x="1407" y="656" text-anchor="end" font-size="14.5" fill="#ffb147">图例7</text><text x="1366" y="723" text-anchor="end" font-size="14.5" fill="#ed4014">图例6</text><text x="1365" y="786.5" text-anchor="end" font-size="14.5" fill="#ff85ad">图例5</text><text x="1363" y="852.5" text-anchor="start" font-size="14.5" fill="#00e5ff">图例4</text><rect x="1713" y="661" width="31" height="17" rx="4" fill="#c23531"/><text x="1750" y="672" font-size="14.5" fill="#333">图例1</text><rect x="1713" y="691" width="31" height="17" rx="4" fill="#5cadff"/><text x="1750" y="702" font-size="14.5" fill="#333">图例2</text><rect x="1713" y="721" width="31" height="17" rx="4" fill="#19be6b"/><text x="1750" y="732" font-size="14.5" fill="#333">图例3</text><rect x="1713" y="751" width="31" height="17" rx="4" fill="#00e5ff"/><text x="1750" y="762" font-size="14.5" fill="#333">图例4</text><rect x="1713" y="781" width="31" height="17" rx="4" fill="#ff85ad"/><text x="1750" y="792" font-size="14.5" fill="#333">图例5</text><rect x="1713" y="811" width="31" height="17" rx="4" fill="#ed4014"/><text x="1750" y="822" font-size="14.5" fill="#333">图例6</text><rect x="1713" y="841" width="31" height="17" rx="4" fill="#ffb147"/><text x="1750" y="852" font-size="14.5" fill="#333">图例7</text></svg>
</body></html>
